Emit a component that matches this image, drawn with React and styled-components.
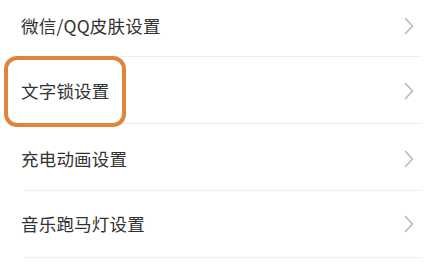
import React from "react";
import styled, { createGlobalStyle } from "styled-components";

const Global = createGlobalStyle`
  html, body { margin: 0; padding: 0; background: #ffffff; }
  body { width: 430px; height: 270px; overflow: hidden; font-family: "Noto Sans CJK SC", "Noto Sans", sans-serif; }
`;

const List = styled.div`
  display: flex;
  flex-direction: column;
  margin-top: -10px;
  padding: 0 8px 0 0;
`;

const Row = styled.div`
  position: relative;
  height: 67px;
  display: flex;
  align-items: center;
  justify-content: space-between;
  padding: 0 8px 0 21px;
  box-sizing: border-box;
  &::after {
    content: "";
    position: absolute;
    left: 24px;
    right: 0;
    bottom: 0;
    height: 1px;
    background: #eeeeee;
  }
`;

const Label = styled.span`
  position: relative;
  top: ${(p) => p.$dy}px;
  font-size: 17.5px;
  color: #333333;
  letter-spacing: 0.2px;
  line-height: 1;
`;

const Arrow = styled.span`
  position: relative;
  top: ${(p) => p.$dy}px;
  display: flex;
`;

const Highlight = styled.div`
  position: absolute;
  left: 4px;
  top: -1px;
  width: 122px;
  height: 71px;
  box-sizing: border-box;
  border: 4px solid #e0843a;
  border-radius: 13px;
  z-index: 1;
`;

const Chevron = () => (
  <svg width="10" height="18" viewBox="0 0 10 18" fill="none">
    <path d="M1.5 1.5 L8.5 9 L1.5 16.5" stroke="#b8b8b8" strokeWidth="1.6" strokeLinecap="round" strokeLinejoin="round" />
  </svg>
);

const items = [
  { label: "微信/QQ皮肤设置", dy: 2 },
  { label: "文字锁设置", dy: 0, hl: true },
  { label: "充电动画设置", dy: 1 },
  { label: "音乐跑马灯设置", dy: -1 },
];

export default function App() {
  return (
    <>
      <Global />
      <List>
        {items.map((it) => (
          <Row key={it.label}>
            {it.hl && <Highlight />}
            <Label $dy={it.dy}>{it.label}</Label>
            <Arrow $dy={it.dy}>
              <Chevron />
            </Arrow>
          </Row>
        ))}
      </List>
    </>
  );
}
